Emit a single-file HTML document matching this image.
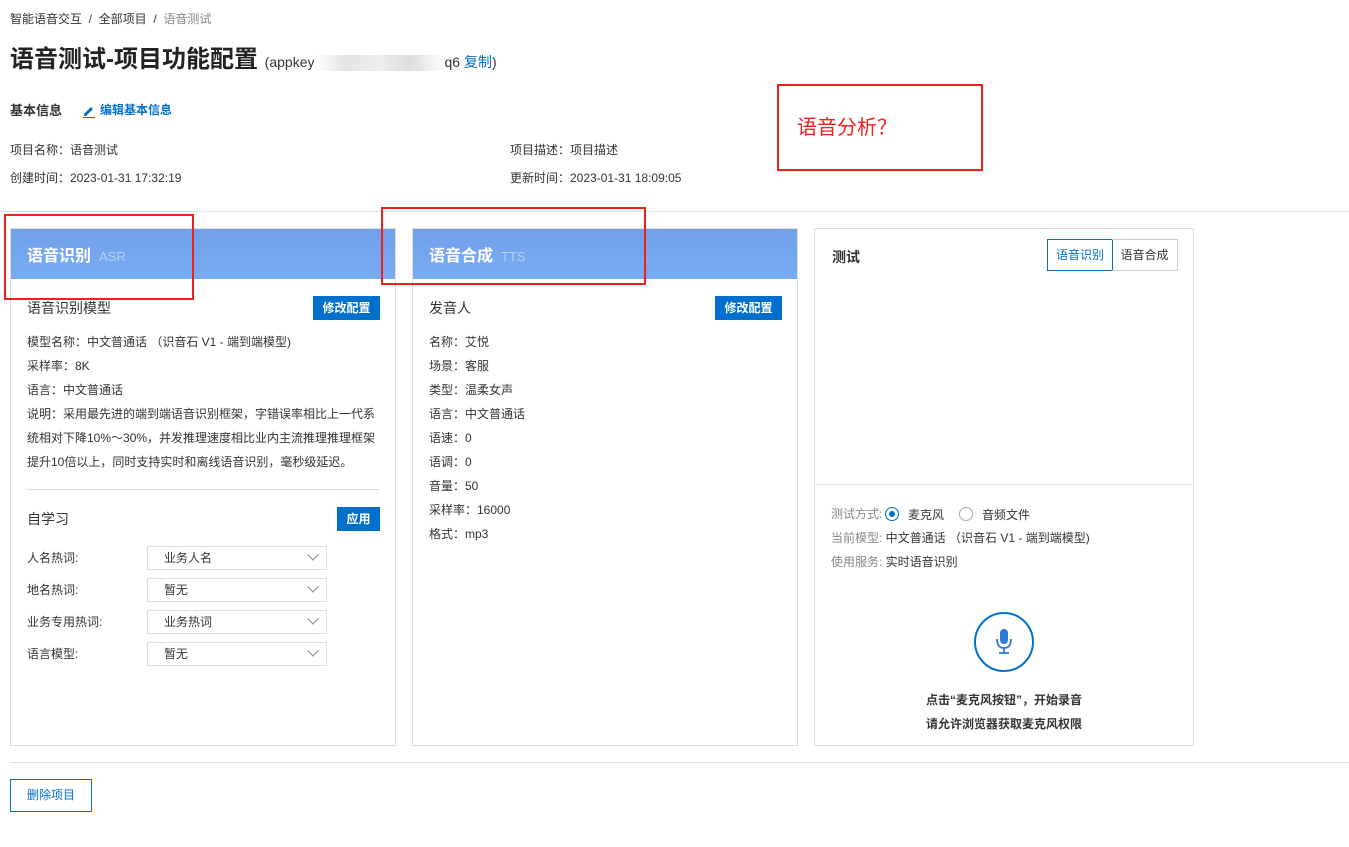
<!DOCTYPE html>
<html><head><meta charset="utf-8"><style>
*{margin:0;padding:0;box-sizing:border-box}
body{width:1349px;height:847px;position:relative;background:#fff;font-family:"Liberation Sans","Noto Sans CJK SC",sans-serif;color:#333;font-size:12px;overflow:hidden}
.a{position:absolute;white-space:nowrap;line-height:1}
.card{position:absolute;top:228px;height:518px;border:1px solid #ddd;background:#fff}
.hd{position:absolute;left:0;top:0;right:0;height:50px;background:linear-gradient(#70a0e8,#78acf2)}
.hd b{position:absolute;left:16px;top:13px;font-size:16px;color:#fff}
.hd span{font-weight:normal;font-size:13px;color:#b8d0f6;margin-left:8px}
.btn{position:absolute;background:#0070cc;color:#fff;font-size:12px;font-weight:bold;text-align:center}
.sel{position:absolute;left:136px;width:180px;height:24px;border:1px solid #ddd;font-size:12px;padding:5px 16px;line-height:13px}
.sel:after{content:"";position:absolute;right:9px;top:4px;width:7px;height:7px;border-right:1.3px solid #888;border-bottom:1.3px solid #888;transform:rotate(45deg)}
.red{position:absolute;border:2px solid #f0201c}
</style></head><body>
<div class="a" style="left:10px;top:13px;font-size:12px;color:#333">智能语音交互 &nbsp;/&nbsp; 全部项目 &nbsp;/&nbsp; <span style="color:#888">语音测试</span></div>
<div class="a" style="left:10px;top:48px;font-size:24px;font-weight:bold;color:#222">语音测试-项目功能配置 <span style="font-size:14px;font-weight:normal;color:#333">(appkey<span style="display:inline-block;width:130px;height:16px;background:linear-gradient(90deg,#fff,#e4e4e4,#eee,#ddd,#fff);vertical-align:middle"></span>q6 <span style="color:#0070cc">复制</span>)</span></div>
<div class="a" style="left:10px;top:104px;font-size:13px;font-weight:bold;color:#333">基本信息</div>
<svg class="a" style="left:82px;top:104px" width="14" height="14" viewBox="0 0 14 14"><path d="M2 10 L9 3 L11 5 L4 12 L2 12Z" fill="#0070cc"/><rect x="1" y="13" width="12" height="1" fill="#0070cc"/></svg>
<div class="a" style="left:100px;top:104px;font-size:12px;color:#0070cc;font-weight:bold">编辑基本信息</div>
<div class="a" style="left:10px;top:144px">项目名称：语音测试</div>
<div class="a" style="left:10px;top:172px">创建时间：2023-01-31 17:32:19</div>
<div class="a" style="left:510px;top:144px">项目描述：项目描述</div>
<div class="a" style="left:510px;top:172px">更新时间：2023-01-31 18:09:05</div>
<div class="a" style="left:0;top:211px;width:1349px;height:1px;background:#e0e0e0"></div>

<div class="card" style="left:10px;width:386px">
 <div class="hd"><b>语音识别<span>ASR</span></b></div>
 <div class="a" style="left:16px;top:72px;font-size:14px">语音识别模型</div>
 <div class="btn" style="left:302px;top:67px;width:67px;height:24px;line-height:24px">修改配置</div>
 <div style="position:absolute;left:16px;top:101px;line-height:24px;font-size:12px;width:355px">模型名称：中文普通话 （识音石 V1 - 端到端模型)<br>采样率：8K<br>语言：中文普通话<br>说明：采用最先进的端到端语音识别框架，字错误率相比上一代系统相对下降10%～30%，并发推理速度相比业内主流推理推理框架提升10倍以上，同时支持实时和离线语音识别，毫秒级延迟。</div>
 <div class="a" style="left:16px;top:260px;width:353px;height:1px;background:#ddd"></div>
 <div class="a" style="left:16px;top:283px;font-size:14px">自学习</div>
 <div class="btn" style="left:326px;top:278px;width:43px;height:24px;line-height:24px">应用</div>
 <div class="a" style="left:16px;top:323px">人名热词:</div><div class="sel" style="top:317px">业务人名</div>
 <div class="a" style="left:16px;top:355px">地名热词:</div><div class="sel" style="top:349px">暂无</div>
 <div class="a" style="left:16px;top:387px">业务专用热词:</div><div class="sel" style="top:381px">业务热词</div>
 <div class="a" style="left:16px;top:419px">语言模型:</div><div class="sel" style="top:413px">暂无</div>
</div>

<div class="card" style="left:412px;width:386px">
 <div class="hd"><b>语音合成<span>TTS</span></b></div>
 <div class="a" style="left:16px;top:72px;font-size:14px">发音人</div>
 <div class="btn" style="left:302px;top:67px;width:67px;height:24px;line-height:24px">修改配置</div>
 <div style="position:absolute;left:16px;top:101px;line-height:24px;font-size:12px">名称：艾悦<br>场景：客服<br>类型：温柔女声<br>语言：中文普通话<br>语速：0<br>语调：0<br>音量：50<br>采样率：16000<br>格式：mp3</div>
</div>

<div class="card" style="left:814px;width:380px">
 <div class="a" style="left:17px;top:21px;font-size:14px;font-weight:bold">测试</div>
 <div class="a" style="left:232px;top:10px;width:66px;height:32px;border:1px solid #0070cc;color:#0070cc;text-align:center;line-height:30px">语音识别</div>
 <div class="a" style="left:297px;top:10px;width:66px;height:32px;border:1px solid #ccc;border-left:none;text-align:center;line-height:30px">语音合成</div>
 <div class="a" style="left:0;top:255px;width:378px;height:1px;background:#e6e6e6"></div>
 <div class="a" style="left:16px;top:279px;color:#888">测试方式:</div>
 <div class="a" style="left:70px;top:278px;width:14px;height:14px;border:1px solid #0070cc;border-radius:50%"><div style="position:absolute;left:3px;top:3px;width:6px;height:6px;border-radius:50%;background:#0070cc"></div></div>
 <div class="a" style="left:93px;top:280px">麦克风</div>
 <div class="a" style="left:144px;top:278px;width:14px;height:14px;border:1px solid #aaa;border-radius:50%"></div>
 <div class="a" style="left:167px;top:280px">音频文件</div>
 <div class="a" style="left:16px;top:303px"><span style="color:#888">当前模型:</span> 中文普通话 （识音石 V1 - 端到端模型)</div>
 <div class="a" style="left:16px;top:327px"><span style="color:#888">使用服务:</span> 实时语音识别</div>
 <div class="a" style="left:159px;top:383px;width:60px;height:60px;border:2px solid #0070cc;border-radius:50%"></div>
 <svg class="a" style="left:179px;top:399px" width="20" height="28" viewBox="0 0 20 28"><rect x="6" y="1" width="8" height="15" rx="4" fill="#2a7ad5"/><path d="M3 11 Q3 20 10 20 Q17 20 17 11" stroke="#2a7ad5" stroke-width="1.8" fill="none"/><path d="M10 20 V25 M5 25 H15" stroke="#2a7ad5" stroke-width="1.8"/></svg>
 <div class="a" style="left:0;width:378px;top:465px;text-align:center;font-weight:bold">点击“麦克风按钮”，开始录音</div>
 <div class="a" style="left:0;width:378px;top:489px;text-align:center;font-weight:bold">请允许浏览器获取麦克风权限</div>
</div>

<div class="a" style="left:10px;top:762px;width:1339px;height:1px;background:#e0e0e0"></div>
<div class="a" style="left:10px;top:779px;width:82px;height:33px;border:1px solid #0070cc;color:#0070cc;text-align:center;line-height:31px">删除项目</div>

<div class="red" style="left:4px;top:214px;width:190px;height:86px"></div>
<div class="red" style="left:381px;top:207px;width:265px;height:78px"></div>
<div class="red" style="left:777px;top:84px;width:206px;height:87px"></div>
<div class="a" style="left:797px;top:118px;font-size:20px;color:#f0201c">语音分析？</div>
</body></html>
